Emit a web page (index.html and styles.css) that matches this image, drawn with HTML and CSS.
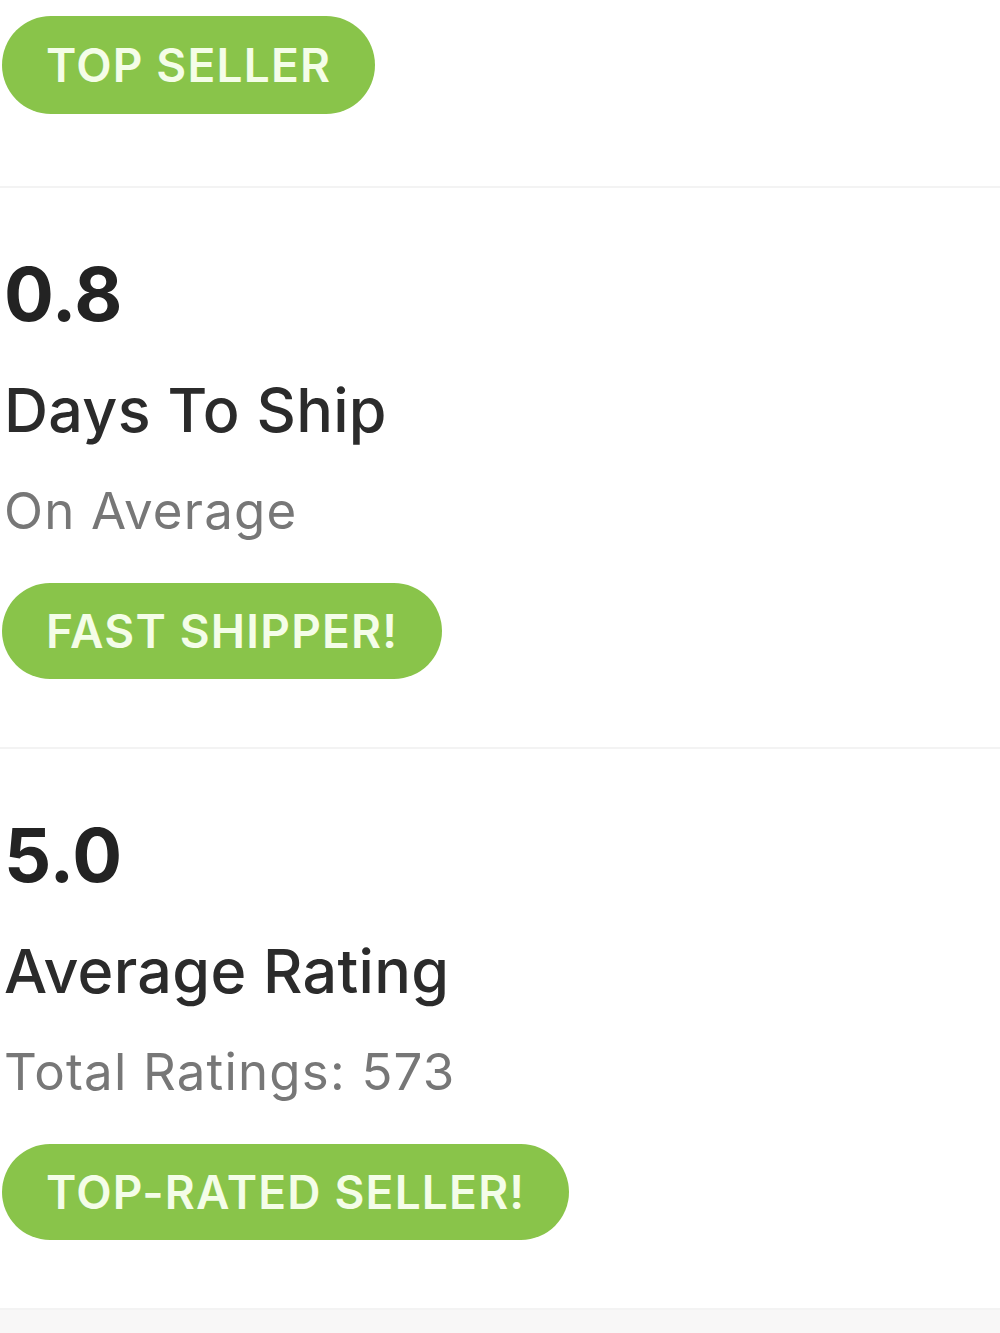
FILE: index.html
```html
<!DOCTYPE html>
<html lang="en">
<head>
<meta charset="utf-8">
<title>Seller Stats</title>
<link rel="stylesheet" href="styles.css">
</head>
<body>
<div class="page">
  <section class="stat stat-first">
    <span class="badge badge-top">TOP SELLER</span>
  </section>
  <section class="stat">
    <div class="value">0.8</div>
    <div class="label">Days To Ship</div>
    <div class="sub">On Average</div>
    <span class="badge">FAST SHIPPER!</span>
  </section>
  <section class="stat">
    <div class="value">5.0</div>
    <div class="label">Average Rating</div>
    <div class="sub">Total Ratings: 573</div>
    <span class="badge">TOP-RATED SELLER!</span>
  </section>
  <div class="footer-space"></div>
</div>
</body>
</html>
```

FILE: styles.css
```css
html, body {
  margin: 0;
  padding: 0;
  background: #ffffff;
}

body {
  font-family: "Inter", "Lato", "Liberation Sans", sans-serif;
  color: #2a2a2a;
}

.page {
  display: flex;
  flex-direction: column;
  min-height: 1333px;
}

.stat {
  display: flex;
  flex-direction: column;
  align-items: flex-start;
  padding: 69px 0 68px 2px;
  border-bottom: 2px solid #f3f3f3;
}

.stat-first {
  padding-top: 16px;
  padding-bottom: 72px;
}

.value {
  font-size: 74px;
  line-height: 74px;
  font-weight: 700;
  color: #232323;
  padding-left: 2px;
}

.label {
  margin-top: 49px;
  font-size: 61px;
  line-height: 61px;
  font-weight: 500;
  color: #2b2b2b;
  letter-spacing: 0.3px;
  padding-left: 2px;
}

.sub {
  margin-top: 44px;
  font-size: 51px;
  line-height: 51px;
  font-weight: 400;
  color: #777777;
  letter-spacing: 1.2px;
  padding-left: 2px;
}

.badge {
  margin-top: 47px;
  display: inline-flex;
  align-items: center;
  height: 96px;
  padding: 0 44px 0 44px;
  border-radius: 48px;
  background: #89c44a;
  color: #f4fde8;
  font-size: 46px;
  font-weight: 600;
  letter-spacing: 1.2px;
  box-sizing: border-box;
}

.badge-top {
  margin-top: 0;
  height: 98px;
  border-radius: 49px;
}

.footer-space {
  flex: 1;
  background: #f8f7f7;
}
```
